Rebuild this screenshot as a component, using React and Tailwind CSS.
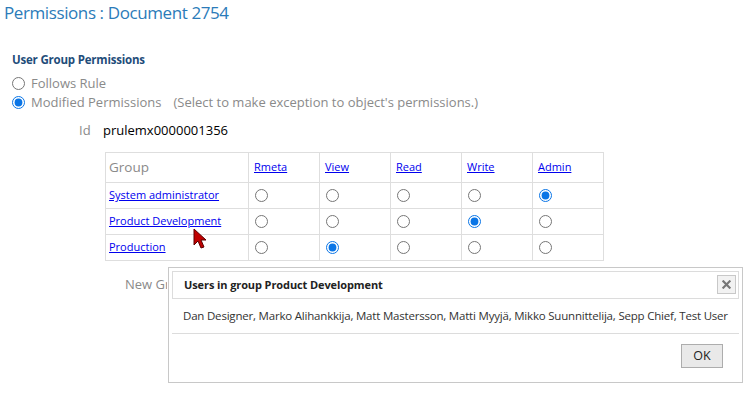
import React from 'react';

const cols = ['Rmeta', 'View', 'Read', 'Write', 'Admin'];

const rows = [
  { name: 'System administrator', value: 'Admin' },
  { name: 'Product Development', value: 'Write' },
  { name: 'Production', value: 'View' },
];

const Radio = ({ checked }) => (
  <input type="radio" checked={checked} readOnly className="m-0 h-[13px] w-[13px] align-middle accent-[#0a75e6]" />
);

const Cursor = () => (
  <svg width="14" height="22" viewBox="0 0 14 22" className="absolute left-[193px] top-[228px]">
    <path d="M1 1 L1 17 L5 13 L8 20 L11 19 L8 12 L13 12 Z" fill="#c00000" stroke="#5a0000" strokeWidth="1" strokeLinejoin="round" />
  </svg>
);

export default function App() {
  return (
    <div className="relative h-[393px] w-[746px] overflow-hidden bg-white font-['Open_Sans',sans-serif]">
      <h1 className="pl-[4px] pt-[1px] text-[17px] leading-[24px] tracking-[-0.4px] text-[#2b7bb9]">Permissions : Document 2754</h1>

      <div className="pl-[12px] pt-[27px]">
        <div className="text-[11.5px] font-bold leading-[16px] tracking-[-0.2px] text-[#1f4d7a]">User Group Permissions</div>
        <div className="mt-[6px] flex flex-col text-[13px] leading-[19px] text-[#8a8a8a]">
          <label className="flex items-center gap-[6px]">
            <Radio checked={false} />
            <span>Follows Rule</span>
          </label>
          <label className="flex items-center gap-[6px]">
            <Radio checked />
            <span>Modified Permissions</span>
            <span className="ml-[6px]">(Select to make exception to object's permissions.)</span>
          </label>
        </div>

        <div className="mt-[9px] flex items-center pl-[67px] text-[13px] leading-[18px]">
          <span className="w-[24px] text-[#8a8a8a]">Id</span>
          <span className="text-black">prulemx0000001356</span>
        </div>

        <table className="ml-[93px] mt-[13px] border-collapse text-[11px]">
          <thead>
            <tr className="h-[30px]">
              <th className="w-[143px] border border-[#dedede] px-[3px] text-left align-middle text-[13.5px] font-normal text-[#8a8a8a]">Group</th>
              {cols.map((c) => (
                <th key={c} className="w-[71px] border border-[#dedede] px-[5px] text-left align-middle font-normal">
                  <a className="text-[#0000ee] underline">{c}</a>
                </th>
              ))}
            </tr>
          </thead>
          <tbody>
            {rows.map((r) => (
              <tr key={r.name} className="h-[26px]">
                <td className="border border-[#dedede] px-[3px] align-middle">
                  <a className="text-[#0000ee] underline">{r.name}</a>
                </td>
                {cols.map((c) => (
                  <td key={c} className="border border-[#dedede] pl-[6px] align-middle leading-none">
                    <Radio checked={r.value === c} />
                  </td>
                ))}
              </tr>
            ))}
          </tbody>
        </table>

        <div className="ml-[113px] mt-[14px] w-[42px] overflow-hidden whitespace-nowrap text-[13px] leading-[18px] text-[#8a8a8a]">New Group</div>
      </div>

      <Cursor />

      <div className="absolute left-[168px] top-[267px] flex h-[116px] w-[575px] flex-col border border-[#c8c8c8] bg-white p-[3px]">
        <div className="flex h-[28px] items-center justify-between border border-[#dcdcdc] pl-[11px] pr-[2px]">
          <span className="text-[11px] font-bold tracking-[-0.1px] text-[#222]">Users in group Product Development</span>
          <button className="relative top-[-1px] flex h-[19px] w-[19px] items-center justify-center border border-[#c8c8c8] bg-[#f2f2f2]">
            <svg width="9" height="9" viewBox="0 0 10 10">
              <path d="M1.5 1.5 L8.5 8.5 M8.5 1.5 L1.5 8.5" stroke="#777" strokeWidth="2.4" strokeLinecap="square" />
            </svg>
          </button>
        </div>
        <div className="flex h-[35px] items-center whitespace-nowrap border-b border-[#dcdcdc] pl-[11px] text-[11.5px] tracking-[-0.2px] text-[#333]">
          Dan Designer, Marko Alihankkija, Matt Mastersson, Matti Myyjä, Mikko Suunnittelija, Sepp Chief, Test User
        </div>
        <div className="flex flex-1 items-start justify-end pr-[16px] pt-[10px]">
          <button className="h-[24px] w-[42px] border border-[#adadad] bg-[#e9e9e9] text-[12.5px] text-[#222]">OK</button>
        </div>
      </div>
    </div>
  );
}
